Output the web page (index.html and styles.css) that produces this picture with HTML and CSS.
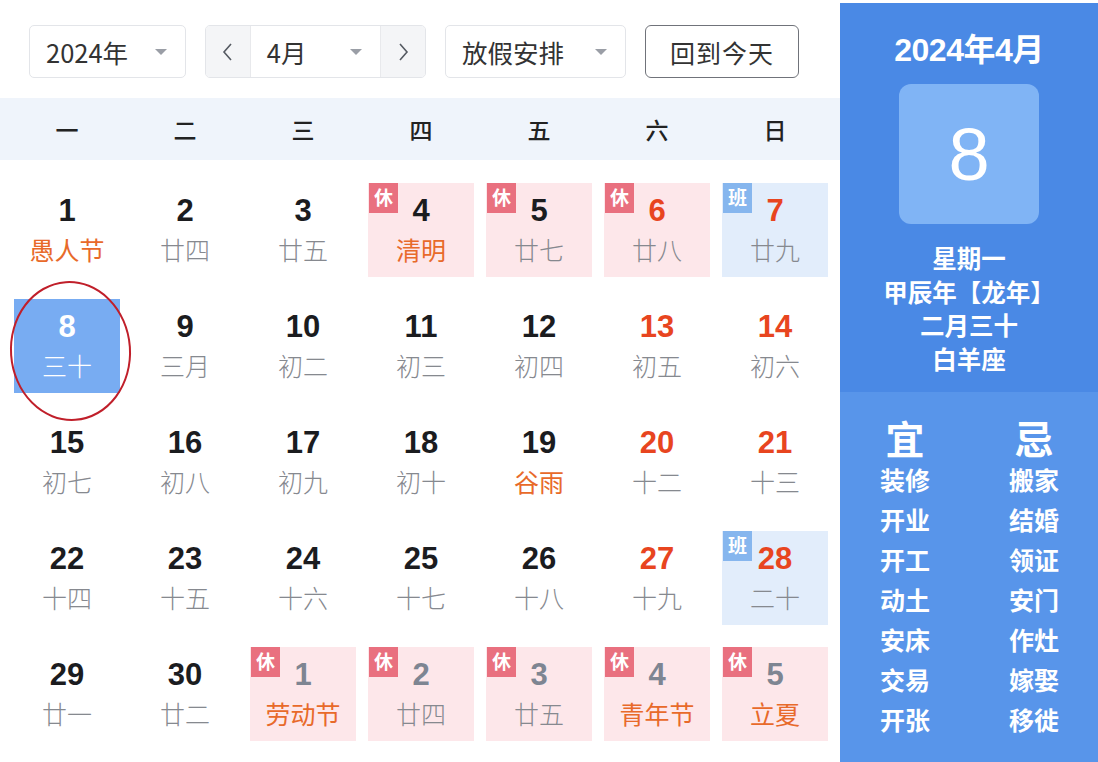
FILE: index.html
```html
<!DOCTYPE html>
<html lang="zh-CN">
<head>
<meta charset="utf-8">
<title>万年历</title>
<link rel="stylesheet" href="styles.css">
</head>
<body>
<div class="page">
  <div class="main">
    <div class="toolbar">
      <div class="select year"><span>2024年</span><i class="caret"></i></div>
      <div class="month-group">
        <div class="nav"><svg width="11" height="20" viewBox="0 0 11 20"><polyline points="9,2 2,10 9,18" fill="none" stroke="#555a62" stroke-width="1.6"/></svg></div>
        <div class="select month"><span>4月</span><i class="caret"></i></div>
        <div class="nav"><svg width="11" height="20" viewBox="0 0 11 20"><polyline points="2,2 9,10 2,18" fill="none" stroke="#555a62" stroke-width="1.6"/></svg></div>
      </div>
      <div class="select holiday"><span>放假安排</span><i class="caret"></i></div>
      <div class="today">回到今天</div>
    </div>
    <div class="weekhead">
      <div>一</div><div>二</div><div>三</div><div>四</div><div>五</div><div>六</div><div>日</div>
    </div>
    <div class="grid">
      <div class="cell"><span class="num">1</span><span class="lunar fest">愚人节</span></div>
      <div class="cell"><span class="num">2</span><span class="lunar">廿四</span></div>
      <div class="cell"><span class="num">3</span><span class="lunar">廿五</span></div>
      <div class="cell rest"><i class="badge">休</i><span class="num">4</span><span class="lunar fest">清明</span></div>
      <div class="cell rest"><i class="badge">休</i><span class="num">5</span><span class="lunar">廿七</span></div>
      <div class="cell rest we"><i class="badge">休</i><span class="num">6</span><span class="lunar">廿八</span></div>
      <div class="cell work we"><i class="badge">班</i><span class="num">7</span><span class="lunar">廿九</span></div>

      <div class="cell sel"><span class="num">8</span><span class="lunar">三十</span></div>
      <div class="cell"><span class="num">9</span><span class="lunar">三月</span></div>
      <div class="cell"><span class="num">10</span><span class="lunar">初二</span></div>
      <div class="cell"><span class="num">11</span><span class="lunar">初三</span></div>
      <div class="cell"><span class="num">12</span><span class="lunar">初四</span></div>
      <div class="cell we"><span class="num">13</span><span class="lunar">初五</span></div>
      <div class="cell we"><span class="num">14</span><span class="lunar">初六</span></div>

      <div class="cell"><span class="num">15</span><span class="lunar">初七</span></div>
      <div class="cell"><span class="num">16</span><span class="lunar">初八</span></div>
      <div class="cell"><span class="num">17</span><span class="lunar">初九</span></div>
      <div class="cell"><span class="num">18</span><span class="lunar">初十</span></div>
      <div class="cell"><span class="num">19</span><span class="lunar fest">谷雨</span></div>
      <div class="cell we"><span class="num">20</span><span class="lunar">十二</span></div>
      <div class="cell we"><span class="num">21</span><span class="lunar">十三</span></div>

      <div class="cell"><span class="num">22</span><span class="lunar">十四</span></div>
      <div class="cell"><span class="num">23</span><span class="lunar">十五</span></div>
      <div class="cell"><span class="num">24</span><span class="lunar">十六</span></div>
      <div class="cell"><span class="num">25</span><span class="lunar">十七</span></div>
      <div class="cell"><span class="num">26</span><span class="lunar">十八</span></div>
      <div class="cell we"><span class="num">27</span><span class="lunar">十九</span></div>
      <div class="cell work we"><i class="badge">班</i><span class="num">28</span><span class="lunar">二十</span></div>

      <div class="cell"><span class="num">29</span><span class="lunar">廿一</span></div>
      <div class="cell"><span class="num">30</span><span class="lunar">廿二</span></div>
      <div class="cell rest next"><i class="badge">休</i><span class="num">1</span><span class="lunar fest">劳动节</span></div>
      <div class="cell rest next"><i class="badge">休</i><span class="num">2</span><span class="lunar">廿四</span></div>
      <div class="cell rest next"><i class="badge">休</i><span class="num">3</span><span class="lunar">廿五</span></div>
      <div class="cell rest next"><i class="badge">休</i><span class="num">4</span><span class="lunar fest">青年节</span></div>
      <div class="cell rest next"><i class="badge">休</i><span class="num">5</span><span class="lunar fest">立夏</span></div>
    </div>
  </div>
  <aside class="panel">
    <div class="panel-top">
      <div class="p-title">2024年4月</div>
      <div class="p-day">8</div>
      <div class="p-info">
        <div>星期一</div>
        <div>甲辰年【龙年】</div>
        <div>二月三十</div>
        <div>白羊座</div>
      </div>
    </div>
    <div class="panel-bottom">
      <div class="col">
        <div class="yj">宜</div>
        <div>装修</div><div>开业</div><div>开工</div><div>动土</div><div>安床</div><div>交易</div><div>开张</div>
      </div>
      <div class="col">
        <div class="yj">忌</div>
        <div>搬家</div><div>结婚</div><div>领证</div><div>安门</div><div>作灶</div><div>嫁娶</div><div>移徙</div>
      </div>
    </div>
  </aside>
</div>
</body>
</html>
```

FILE: styles.css
```css
* { box-sizing: border-box; }
body {
  margin: 0;
  background: #fff;
  font-family: "Noto Sans CJK SC", "Noto Sans", sans-serif;
  color: #333;
}
.page {
  display: flex;
  width: 1098px;
  height: 762px;
  overflow: hidden;
}
.main {
  width: 840px;
  flex: none;
}
.toolbar {
  height: 98px;
  padding: 5px 0 0 29px;
  display: flex;
  align-items: center;
  gap: 19px;
}
.select {
  height: 53px;
  border: 1px solid #e3e5e9;
  border-radius: 5px;
  display: flex;
  align-items: center;
  justify-content: space-between;
  padding: 0 18px 0 16px;
  font-size: 25.5px;
  color: #333;
  background: #fff;
}
.caret {
  width: 0;
  height: 0;
  border-left: 6px solid transparent;
  border-right: 6px solid transparent;
  border-top: 6px solid #9a9ea6;
}
.year { width: 157px; }
.month-group {
  display: flex;
  height: 53px;
  width: 221px;
  border: 1px solid #e3e5e9;
  border-radius: 5px;
  overflow: hidden;
}
.nav {
  width: 44px;
  background: #f4f5f7;
  display: flex;
  align-items: center;
  justify-content: center;
}
.month-group .select {
  width: 132px;
  height: 51px;
  border: none;
  border-left: 1px solid #e8e9ec;
  border-right: 1px solid #e8e9ec;
  border-radius: 0;
}
.holiday { width: 181px; }
.today {
  width: 154px;
  height: 53px;
  border: 1.5px solid #70737a;
  border-radius: 6px;
  display: flex;
  align-items: center;
  justify-content: center;
  font-size: 25px;
  color: #333;
  letter-spacing: 1px;
}
.weekhead {
  height: 62px;
  background: #eff4fb;
  display: grid;
  grid-template-columns: repeat(7, 106px);
  column-gap: 12px;
  padding-left: 14px;
  align-items: center;
  text-align: center;
  font-size: 23px;
  font-weight: 500;
  color: #222;
}
.grid {
  display: grid;
  grid-template-columns: repeat(7, 106px);
  grid-auto-rows: 94px;
  column-gap: 12px;
  row-gap: 22px;
  padding: 23px 0 0 14px;
}
.cell {
  position: relative;
  display: flex;
  flex-direction: column;
  align-items: center;
  padding-top: 11px;
}
.num {
  font-family: "Liberation Sans", Arial, sans-serif;
  font-weight: 700;
  font-size: 31px;
  line-height: 34px;
  color: #1b1c1f;
}
.lunar {
  margin-top: 6px;
  font-size: 25px;
  line-height: 30px;
  font-weight: 300;
  color: #86898f;
}
.lunar.fest { color: #e86a2a; font-weight: 400; }
.we .num { color: #e8451f; }
.next .num { color: #7e8592; }
.rest { background: #fde7ea; }
.work { background: #e2edfb; }
.badge {
  position: absolute;
  top: 0;
  left: 1px;
  width: 29px;
  height: 30px;
  background: #e9707f;
  color: #fff;
  font-style: normal;
  font-size: 19px;
  font-weight: 700;
  line-height: 28px;
  text-align: center;
}
.work .badge { background: #86b6ee; }
.sel { background: #78acf2; }
.sel .num, .sel .lunar { color: #fff; }
.sel::after {
  content: "";
  position: absolute;
  left: -4px;
  top: -18px;
  width: 117px;
  height: 136px;
  border: 2.5px solid #c01f2a;
  border-radius: 50%;
  transform: rotate(-4deg);
}
.panel {
  width: 258px;
  flex: none;
  margin-top: 3px;
  display: flex;
  flex-direction: column;
  color: #fff;
  background: #4a89e5;
}
.panel-top {
  height: 389px;
  display: flex;
  flex-direction: column;
  align-items: center;
  padding-top: 29px;
}
.p-title {
  font-family: "Liberation Sans", "Noto Sans CJK SC", sans-serif;
  font-weight: 700;
  font-size: 32px;
  line-height: 36px;
  letter-spacing: -0.5px;
}
.p-day {
  margin-top: 16px;
  width: 140px;
  height: 140px;
  border-radius: 12px;
  background: #80b4f5;
  display: flex;
  align-items: center;
  justify-content: center;
  font-family: "Liberation Sans", Arial, sans-serif;
  font-size: 74px;
}
.p-info {
  margin-top: 17px;
  text-align: center;
  font-size: 24.5px;
  font-weight: 700;
  line-height: 33.5px;
}
.panel-bottom {
  flex: 1;
  background: #5895ea;
  display: grid;
  grid-template-columns: 130px 128px;
  padding-top: 23px;
}
.col {
  display: flex;
  flex-direction: column;
  align-items: center;
  font-size: 25px;
  font-weight: 700;
  line-height: 40px;
}
.col .yj {
  font-size: 39px;
  line-height: 44px;
}
```
